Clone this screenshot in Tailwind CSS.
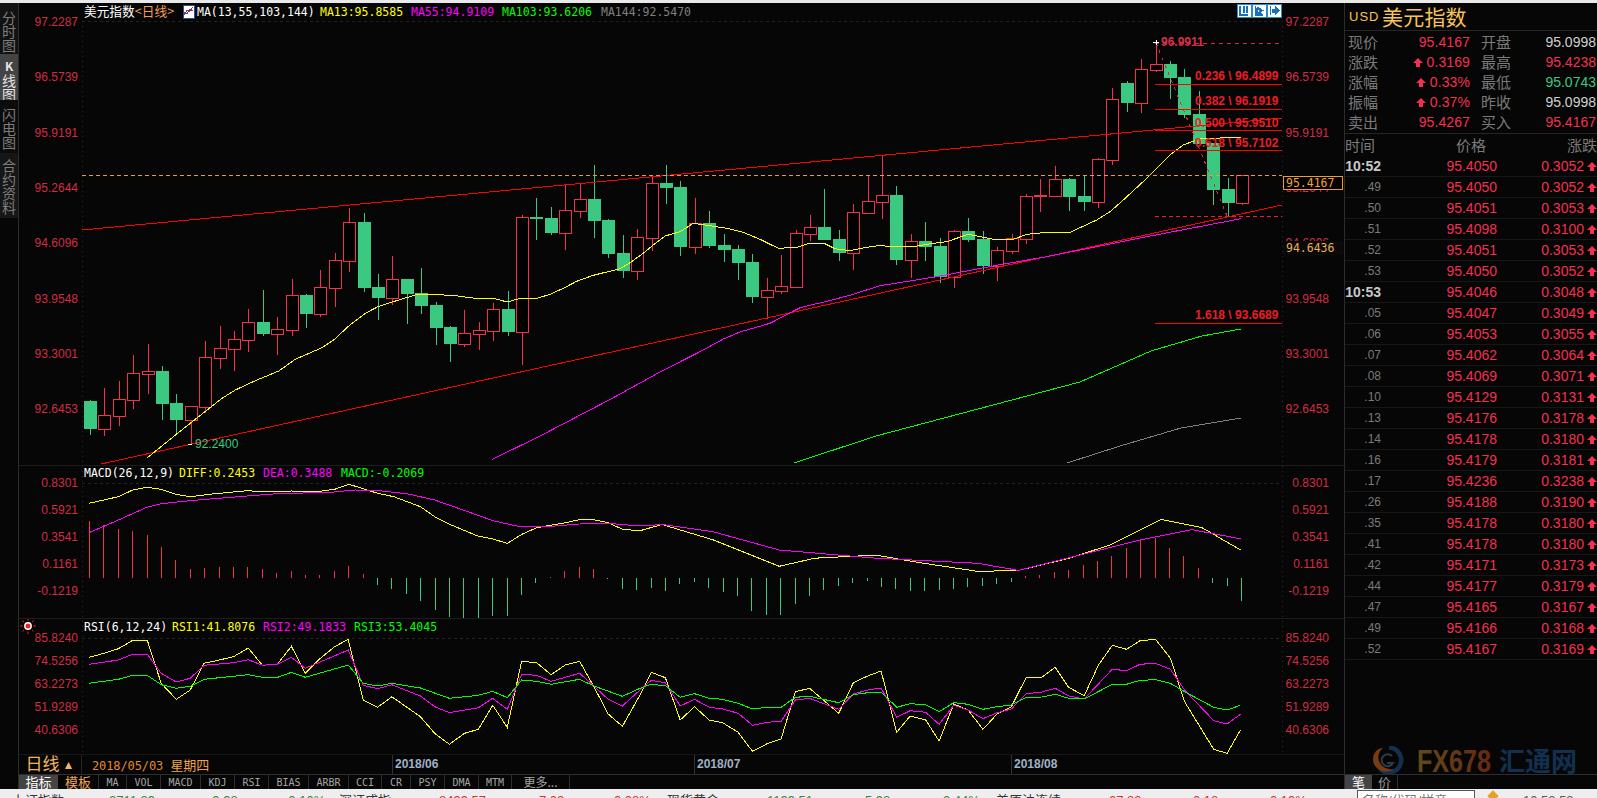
<!DOCTYPE html>
<html lang="zh-CN">
<head>
  <meta charset="UTF-8" />
  <title>美元指数 日线</title>
  <script src="https://cdn.jsdelivr.net/npm/@tailwindcss/browser@4"></script>
</head>
<body class="bg-[#060606] font-['Liberation_Sans','Noto_Sans_CJK_SC',sans-serif]">
<div class="w-[1597px] h-[798px] overflow-hidden flex flex-col">
  <!-- window strip -->
  <div class="h-[3px] bg-[#e9e9eb]"></div>

  <div class="flex h-[786px]">
    <!-- side tabs -->
    <div class="w-[19px] shrink-0 border-r border-[#2c2c2c] flex flex-col items-center text-[14px] leading-[14px] text-[#7d7d7d] font-['Noto_Sans_CJK_SC',sans-serif]">
      <div class="w-full h-[51px] pt-[7px] bg-[#121212] text-center">分<br>时<br>图</div>
      <div class="w-full h-[46px] pt-[4px] bg-[#444444] text-center text-[#e4e4e4]"><b class="text-[12px]">K</b><br>线<br>图</div>
      <div class="w-full h-[53px] pt-[7px] bg-[#0c0c0c] text-center">闪<br>电<br>图</div>
      <div class="w-full h-[65px] pt-[5px] bg-[#161616] text-center">合<br>约<br>资<br>料</div>
    </div>

    <!-- chart column -->
    <div class="w-[1325px] shrink-0 flex flex-col">
      <svg id="chart" width="1325" height="751" viewBox="19 3 1325 751" shape-rendering="crispEdges" class="block">
        <!-- title rows -->
        <g font-size="11.5" font-family="DejaVu Sans Mono" shape-rendering="auto">
          <text x="84" y="16" fill="#ffffff" font-size="12.7" font-family="Noto Sans CJK SC">美元指数<tspan fill="#f0a050">&lt;日线&gt;</tspan></text>
          <text x="197" y="16" fill="#ffffff">MA(13,55,103,144)</text>
          <text x="320" y="16" fill="#ffff00">MA13:95.8585</text>
          <text x="411" y="16" fill="#ff00ff">MA55:94.9109</text>
          <text x="502" y="16" fill="#00ff00">MA103:93.6206</text>
          <text x="601" y="16" fill="#808080">MA144:92.5470</text>
          <text x="84" y="477" fill="#ffffff">MACD(26,12,9)</text>
          <text x="179" y="477" fill="#ffff00">DIFF:0.2453</text>
          <text x="263" y="477" fill="#ff00ff">DEA:0.3488</text>
          <text x="341" y="477" fill="#00ff00">MACD:-0.2069</text>
          <text x="84" y="631" fill="#ffffff">RSI(6,12,24)</text>
          <text x="172" y="631" fill="#ffff00">RSI1:41.8076</text>
          <text x="263" y="631" fill="#ff00ff">RSI2:49.1833</text>
          <text x="354" y="631" fill="#00ff00">RSI3:53.4045</text>
        </g>
        <!-- ma icon -->
        <rect x="183" y="5" width="11" height="13" fill="#ffffff" stroke="#2a4aa0" />
        <path d="M184 15 187 10 189 12 193 7" fill="none" stroke="#e02020" />
        <path d="M184 12 187 14 190 9 193 11" fill="none" stroke="#2050d0" />
        <!-- top right view buttons -->
        <g>
          <rect x="1237" y="4" width="14" height="13" fill="#ffffff" stroke="#2a88d8" />
          <path d="M1240 6V15H1248M1244 6V13M1247 6V13" fill="none" stroke="#1a70c0" stroke-width="1.4" />
          <rect x="1252" y="4" width="14" height="13" fill="#ffffff" stroke="#2a88d8" />
          <path d="M1255 6V15H1263M1257 7 1263 10.5 1257 13Z" fill="#1a70c0" stroke="#1a70c0" />
          <rect x="1267" y="4" width="14" height="13" fill="#ffffff" stroke="#2a88d8" />
          <path d="M1270 6V15M1272 9H1275V6L1279 10.5 1275 15V12H1272Z" fill="#1a70c0" stroke="#1a70c0" />
        </g>
        <!-- alert sun -->
        <g stroke="#ee2222" shape-rendering="auto">
          <path d="M28 618V620.5M28 631.5V634M20 626H22.5M33.5 626H36M22.5 620.5 24 622M32 630 33.5 631.5M22.5 631.5 24 630M32 622 33.5 620.5" />
          <circle cx="28" cy="626" r="3.2" fill="#ee2222" stroke="#ffffff" stroke-width="1.4" />
        </g>
      </svg>

      <!-- date row -->
      <div class="relative h-[20px] border-t border-[#171717] flex items-center">
        <div class="w-[63px] h-full border-r border-[#242424] flex items-center justify-center gap-[3px] text-[17px] text-[#f2b460]">日线<span class="text-[12px] text-[#f2b460]">▲</span></div>
        <div class="ml-[10px] text-[12px] text-[#e08a2c] font-['DejaVu_Sans_Mono',monospace] tracking-[-0.1px]">2018/05/03 <span class="text-[13px] text-[#f0a24a] font-['Noto_Sans_CJK_SC',sans-serif]">星期四</span></div>
        <span class="absolute left-[373px] top-0 h-full border-l border-[#333333] pl-[2px] text-[12px] font-bold leading-[19px] text-[#9fb2c6]">2018/06</span>
        <span class="absolute left-[675px] top-0 h-full border-l border-[#333333] pl-[2px] text-[12px] font-bold leading-[19px] text-[#9fb2c6]">2018/07</span>
        <span class="absolute left-[992px] top-0 h-full border-l border-[#333333] pl-[2px] text-[12px] font-bold leading-[19px] text-[#9fb2c6]">2018/08</span>
      </div>

      <!-- indicator tabs -->
      <div class="h-[15px] border-t border-[#2e2e2e] flex items-center text-[10px] text-[#a4a4a4] font-['DejaVu_Sans_Mono',monospace]">
        <div class="w-[39px] h-full bg-[#444444] flex items-center justify-center text-[13px] text-white font-['Noto_Sans_CJK_SC',sans-serif]">指标</div>
        <div class="w-[41px] h-full border-r border-[#2e2e2e] flex items-center justify-center text-[13px] text-[#f2a64a] font-['Noto_Sans_CJK_SC',sans-serif]">模板</div>
        <div class="w-[28px] h-full border-r border-[#2e2e2e] flex items-center justify-center">MA</div>
        <div class="w-[34px] h-full border-r border-[#2e2e2e] flex items-center justify-center">VOL</div>
        <div class="w-[40px] h-full border-r border-[#2e2e2e] flex items-center justify-center">MACD</div>
        <div class="w-[34px] h-full border-r border-[#2e2e2e] flex items-center justify-center">KDJ</div>
        <div class="w-[34px] h-full border-r border-[#2e2e2e] flex items-center justify-center">RSI</div>
        <div class="w-[40px] h-full border-r border-[#2e2e2e] flex items-center justify-center">BIAS</div>
        <div class="w-[40px] h-full border-r border-[#2e2e2e] flex items-center justify-center">ARBR</div>
        <div class="w-[33px] h-full border-r border-[#2e2e2e] flex items-center justify-center">CCI</div>
        <div class="w-[29px] h-full border-r border-[#2e2e2e] flex items-center justify-center">CR</div>
        <div class="w-[34px] h-full border-r border-[#2e2e2e] flex items-center justify-center">PSY</div>
        <div class="w-[34px] h-full border-r border-[#2e2e2e] flex items-center justify-center">DMA</div>
        <div class="w-[33px] h-full border-r border-[#2e2e2e] flex items-center justify-center">MTM</div>
        <div class="w-[58px] h-full border-r border-[#2e2e2e] flex items-center justify-center text-[12px] font-['Noto_Sans_CJK_SC',sans-serif]">更多...</div>
      </div>
    </div>

    <!-- quote panel -->
    <div class="w-[253px] shrink-0 border-l border-[#2c2c2c] flex flex-col">
      <div class="h-[28px] border-b border-[#262626] flex items-center pl-[4px] text-[#f6c35c]">
        <span class="text-[13px] tracking-[1px] w-[33px]">USD</span>
        <span class="text-[21px] tracking-[0.2px] font-['Noto_Sans_CJK_SC',sans-serif] leading-none">美元指数</span>
      </div>

      <div class="h-[103px] pt-px border-b border-[#262626]" id="stats"></div>

      <div class="h-[22px] flex items-center text-[15px] text-[#7a7a7a] font-['Noto_Sans_CJK_SC',sans-serif] whitespace-nowrap">
        <span class="w-[112px]">时间</span><span class="w-[112px]">价格</span><span>涨跌</span>
      </div>
      <div id="trades"></div>

      <!-- watermark -->
      <svg class="mt-auto ml-[27px] block" width="225" height="28" viewBox="0 0 225 28">
        <defs>
          <linearGradient id="fxFill" x1="0" x2="1" y1="0" y2="0">
            <stop offset="0" stop-color="#5e4a1c" />
            <stop offset="1" stop-color="#682810" />
          </linearGradient>
        </defs>
        <path d="M17 1.5A12.500 12.500 0 1 1 8 23" fill="none" stroke="#14304e" stroke-width="4.500" />
        <path d="M1 14C1 6 6 2 11 2 6 6 5 12 8 17 11 22 17 24 22 23 17 27 10 26 6 23 2.500 20 1 17 1 14Z" fill="#7a3a12" />
        <path d="M20 10A6 6 0 1 0 21 17H15" fill="none" stroke="#2a3c4c" stroke-width="2" />
        <text x="45" y="26" font-family="Liberation Sans" font-weight="700" font-size="31" textLength="74" lengthAdjust="spacingAndGlyphs" fill="url(#fxFill)">FX678</text>
        <text x="127" y="25" font-family="Noto Sans CJK SC" font-weight="700" font-size="26" fill="#12304f">汇通网</text>
      </svg>

      <div class="h-[15px] border-t border-[#2e2e2e] flex items-center text-[13px] font-['Noto_Sans_CJK_SC',sans-serif]">
        <div class="w-[27px] h-full bg-[#444444] flex items-center justify-center text-white">笔</div>
        <div class="w-[26px] h-full border-r border-[#2e2e2e] flex items-center justify-center text-[#9a9a9a]">价</div>
      </div>
    </div>
  </div>

  <!-- index ticker, cut off by the window edge -->
  <div class="h-[9px] bg-[#eeeef0] flex overflow-hidden text-[13px] leading-[13px] whitespace-nowrap">
    <div class="w-[109px] pl-[12px] pt-[5px] text-[#333333]">上证指数</div>
    <div class="w-[99px] pt-[5px] text-[#1f8f3a]">2711.39</div>
    <div class="w-[76px] pt-[5px] text-[#1f8f3a]">-9.98 ↓</div>
    <div class="w-[55px] pt-[5px] text-[#1f8f3a]">-0.10%</div>
    <div class="w-[100px] pt-[5px] text-[#333333]">深证成指</div>
    <div class="w-[100px] pt-[5px] text-[#d8322c]">8499.57</div>
    <div class="w-[75px] pt-[5px] text-[#d8322c]">7.02 ↑</div>
    <div class="w-[53px] pt-[5px] text-[#d8322c]">0.08%</div>
    <div class="w-[100px] pt-[5px] text-[#333333]">现货黄金</div>
    <div class="w-[98px] pt-[5px] text-[#1f8f3a]">1199.51</div>
    <div class="w-[78px] pt-[5px] text-[#1f8f3a]">5.98 ↓</div>
    <div class="w-[53px] pt-[5px] text-[#1f8f3a]">0.44%</div>
    <div class="w-[113px] pt-[5px] text-[#333333]">美原油连续</div>
    <div class="w-[84px] pt-[5px] text-[#d8322c]">67.83</div>
    <div class="w-[77px] pt-[5px] text-[#d8322c]">0.18 ↑</div>
    <div class="w-[87px] pt-[5px] text-[#d8322c]">0.19%</div>
    <div class="w-[118px] h-full mt-px border border-[#555555] bg-white pl-[4px] pt-[3px] text-[#777777]">名称/代码/拼音</div>
    <div class="w-[48px] pl-[14px] pt-[3px]"><span class="block w-[8px] h-[8px] rotate-45 bg-[#e8a020]"></span></div>
    <div class="pt-[5px] text-[#555555]">10:52:58</div>
  </div>
</div>

<script>
  const svg = document.getElementById('chart');
  const NS = 'http://www.w3.org/2000/svg';
  const RED = '#f5304f', GREEN = '#3bc880', BG = '#060606';

  function el(tag, attrs, text) {
    const n = document.createElementNS(NS, tag);
    for (const k in attrs) n.setAttribute(k, attrs[k]);
    if (text) n.textContent = text;
    svg.appendChild(n);
    return n;
  }

  // crop coordinates -> page coordinates
  const conv = (pts, x0, sx, y0, sy) => pts.map(p => [x0 + p[0] / sx, y0 + p[1] / sy]);
  const poly = (pts, color, dash) => el('polyline', {
    points: pts.map(p => p[0].toFixed(1) + ',' + p[1].toFixed(1)).join(' '),
    fill: 'none', stroke: color, 'stroke-dasharray': dash || 'none'
  });
  const hline = (x1, x2, y, color, dash) => el('line', { x1, x2, y1: y, y2: y, stroke: color, 'stroke-dasharray': dash || 'none' });

  // panel frames
  hline(19, 1344, 465.5, '#1c1c1c');
  hline(19, 1344, 618.5, '#1c1c1c');
  [21.5, 483.5, 638.5].forEach(y => hline(82, 1282, y, '#222222', '3 3'));
  [82.5, 1282.5].forEach(x => el('line', { x1: x, x2: x, y1: 21, y2: 753, stroke: '#2a2a2a', 'stroke-dasharray': '1 4' }));

  // axes
  const axes = [
    [['97.2287', '96.5739', '95.9191', '95.2644', '94.6096', '93.9548', '93.3001', '92.6453'], 21.5, 55.3],
    [['0.8301', '0.5921', '0.3541', '0.1161', '-0.1219'], 482.7, 27],
    [['85.8240', '74.5256', '63.2273', '51.9289', '40.6306'], 637.7, 23]
  ];
  axes.forEach(([labels, top, step]) => labels.forEach((t, i) => {
    const y = top + i * step + 4.5;
    el('text', { x: 78, y, fill: '#d22c44', 'font-size': 12, 'text-anchor': 'end', 'shape-rendering': 'auto' }, t);
    el('text', { x: 1329, y, fill: '#d22c44', 'font-size': 12, 'text-anchor': 'end', 'shape-rendering': 'auto' }, t);
  }));

  // candles: high, body top, body bottom, low, u = up / d = down (crop y values)
  const c1 = [[630,633,717,735,'d'],[595,676,716,738,'u'],[573,628,677,708,'u'],[495,550,629,657,'u'],[462,544,551,612,'u'],[528,543,642,690,'d'],[612,639,690,735,'d'],[649,649,689,762,'u'],[453,502,650,668,'u'],[408,475,503,537,'u'],[423,448,476,543,'u'],[357,397,449,486,'u'],[300,396,432,438,'d'],[381,418,431,495,'u'],[267,316,419,438,'u'],[312,315,372,414,'d'],[240,292,371,381,'u'],[189,211,293,351,'u'],[54,97,212,246,'u'],[69,96,294,306,'d'],[252,291,324,390,'d'],[198,268,323,345,'u'],[267,267,312,402,'d'],[234,309,348,372,'d'],[336,345,414,465,'d'],[408,411,462,516,'d'],[360,430,461,471,'u'],[396,420,431,480,'u'],[339,358,422,453,'u']];
  const c2 = [[423,477,546,558,'d'],[195,202,545,645,'u'],[144,201,207,270,'d'],[171,204,249,255,'d'],[105,181,248,300,'u'],[100,148,182,204,'u'],[45,147,213,264,'d'],[207,210,312,324,'d'],[255,309,363,384,'d'],[237,262,362,390,'u'],[75,99,263,303,'u'],[45,99,114,162,'d'],[93,111,291,318,'d'],[144,220,290,312,'u'],[183,219,288,294,'d'],[252,285,300,336,'d'],[285,297,339,390,'d'],[312,336,441,459,'d'],[384,421,440,507,'u'],[315,409,422,432,'u'],[240,250,410,414,'u'],[195,232,251,273,'u'],[117,231,270,270,'d'],[240,267,309,333,'d'],[162,187,308,360,'u'],[78,154,188,191,'u'],[15,136,155,207,'u']];
  const c3 = [[468,495,690,705,'d'],[612,634,689,744,'u'],[576,633,651,693,'d'],[625,648,741,759,'d'],[600,604,741,774,'u'],[564,603,630,636,'d'],[603,627,708,732,'d'],[651,660,708,753,'u'],[612,625,662,672,'u'],[492,499,626,642,'u'],[447,495,499,546,'u'],[408,448,497,497,'u'],[444,447,501,543,'d'],[435,498,516,543,'d'],[384,388,516,534,'u'],[174,208,389,405,'u'],[153,159,219,246,'d'],[87,118,218,249,'u'],[33,103,120,126,'u'],[93,102,144,207,'d'],[117,141,255,264,'d'],[183,252,342,342,'d'],[339,339,480,525,'d'],[444,477,519,558,'d'],[435,436,519,525,'u']];
  const candles = [[c1, 190], [c2, 150], [c3, 30]].flatMap(([set, y0]) => set.map(c => [y0 + c[0] / 3, y0 + c[1] / 3, y0 + c[2] / 3, y0 + c[3] / 3, c[4]].map(v => typeof v === 'number' ? Math.round(v) : v)));
  const barX = i => Math.round(90 + 14.4 * i);

  candles.forEach(([hi, top, bot, lo, dir], i) => {
    const x = barX(i), color = dir === 'u' ? RED : GREEN;
    el('rect', { x, y: hi, width: 1, height: lo - hi, fill: color });
    if (dir === 'u') el('rect', { x: x - 5.5, y: top + 0.5, width: 12, height: Math.max(bot - top, 1), fill: '#000000', stroke: color });
    else el('rect', { x: x - 6, y: top, width: 13, height: bot - top, fill: color });
  });

  // moving averages
  const ma13 = [
    ...conv([[195,804],[283,733],[360,672],[420,625],[460,600],[520,572],[590,543],[640,508],[720,473],[755,450],[800,408],[850,370],[890,349],[950,330],[1000,315],[1050,313],[1120,317],[1180,325]], 82, 3, 190, 3),
    ...conv([[40,445],[82,456],[120,445],[172,445],[210,433],[250,415],[290,394],[340,376],[420,356],[450,338],[490,310],[520,285],[555,258],[600,245],[640,220],[690,227],[740,235],[790,247],[840,268],[895,295],[950,292],[985,281],[1035,281],[1065,296],[1110,302],[1150,294],[1200,286]], 480, 3, 150, 3),
    ...conv([[30,650],[100,650],[160,640],[200,635],[265,613],[340,628],[400,628],[440,613],[500,607],[570,607],[650,570],[690,545],[730,510],[810,436],[870,375],[910,345],[960,326],[1083,322]], 880, 3, 30, 3)
  ];
  const ma55 = [
    [492,459.5],[540,436],[611,399],[660,372],
    ...conv([[670,600],[730,567],[780,546],[870,520],[960,473],[1040,454],[1110,436]], 480, 3, 150, 3),
    ...conv([[0,767],[170,740],[350,706],[500,680],[800,620],[1083,566]], 880, 3, 30, 3)
  ];
  poly([[82,230],[1282,118]], '#ff0000');
  poly([[101,464],[1282,205]], '#ff0000');
  poly(ma13, '#ffff00');
  poly(ma55, '#ff00ff');
  poly([[794,463],[876,436],[978,409],[1080,382],[1151,351],[1202,336],[1241,329]], '#00ff00');
  poly([[1067,463],[1120,446],[1181,428],[1241,418]], '#808080');

  // current price and fibonacci levels
  hline(82, 1282, 175.5, '#e89a3c', '4 3');
  poly([[1156,43],[1227,216]], '#e8252d', '3 5');
  hline(1155, 1282, 43.5, '#d6283c', '4 4');
  hline(1155, 1282, 216.5, '#ff1a1a', '4 3');
  [84.5, 109.5, 130.5, 150.5, 323.5].forEach(y => hline(1155, 1282, y, '#ff0000'));
  [['0.236 \\ 96.4899', 80], ['0.382 \\ 96.1919', 105], ['0.500 \\ 95.9510', 127], ['0.618 \\ 95.7102', 147], ['1.618 \\ 93.6689', 319]].forEach(([t, y]) => {
    el('text', { x: 1195, y, fill: '#ee1c25', 'font-size': 12, 'font-weight': 700, 'shape-rendering': 'auto' }, t);
  });
  el('text', { x: 1161, y: 46, fill: '#d6304a', 'font-size': 12, 'font-weight': 700, 'shape-rendering': 'auto' }, '96.9911');
  el('text', { x: 195, y: 448, fill: GREEN, 'font-size': 12, 'shape-rendering': 'auto' }, '92.2400');
  hline(188, 192, 444.5, '#ffffff');
  hline(1153, 1159, 42.5, '#ffffff');
  el('line', { x1: 1156, x2: 1156, y1: 40, y2: 45, stroke: '#ffffff' });

  // price tags on the right axis
  el('rect', { x: 1283.5, y: 176.5, width: 59, height: 13, fill: '#000000', stroke: '#f09a30' });
  el('text', { x: 1286, y: 187, fill: '#f0a040', 'font-size': 11.5, 'font-family': 'DejaVu Sans Mono', 'shape-rendering': 'auto' }, '95.4167');
  el('rect', { x: 1283, y: 241, width: 60, height: 14, fill: '#0a0a0a' });
  el('text', { x: 1286, y: 252, fill: '#e8b060', 'font-size': 11.5, 'font-family': 'DejaVu Sans Mono', 'shape-rendering': 'auto' }, '94.6436');

  // macd histogram, pixels above / below the zero line
  const macd = [57,53,49,47,43,31,18,9,10,11,11,11,9,5,7,3,3,7,12,4,-7,-11,-16,-23,-32,-39,-40,-40,-38,-38,-17,-5,1,7,11,9,-1,-11,-12,-10,-13,-6,-4,-10,-14,-18,-33,-37,-37,-26,-18,-12,-8,-5,-3,-9,-11,-13,-13,-12,-11,-9,-8,-6,-4,2,3,6,8,13,17,22,30,38,40,30,22,10,-5,-8,-23];
  macd.forEach((v, i) => {
    el('rect', { x: barX(i) - 1, y: v > 0 ? 578 - v : 578, width: 1, height: Math.abs(v), fill: v > 0 ? RED : GREEN });
  });
  poly([
    ...conv([[218,190],[290,170],[325,150],[360,142],[395,148],[430,163],[465,170],[520,162],[605,152],[660,156],[715,153],[770,156],[820,148],[855,133],[890,146],[925,160],[965,170],[1030,200],[1065,230],[1100,252],[1170,288],[1205,296],[1243,310],[1280,282],[1315,263],[1385,248],[1420,239],[1455,239],[1490,248],[1525,268],[1568,272]], 0, 2.45, 440, 3),
    ...conv([[650,515],[700,530],[765,556],[800,548],[860,545],[900,552],[960,561],[1000,560],[1050,548],[1090,535],[1140,510],[1180,518],[1218,540]], 0, 0.9818, 0, 0.9818)
  ], '#ffff00');
  poly([
    ...conv([[218,278],[290,240],[360,202],[395,191],[465,182],[605,168],[690,160],[800,158],[870,150],[930,152],[1000,162],[1065,180],[1130,208],[1210,243],[1270,259],[1350,259],[1420,252],[1480,249],[1568,258]], 0, 2.45, 440, 3),
    ...conv([[650,515],[700,522],[765,540],[860,548],[960,553],[1000,560],[1060,545],[1120,530],[1170,520],[1218,529]], 0, 0.9818, 0, 0.9818)
  ], '#ff00ff');

  // rsi
  poly([
    ...conv([[218,172],[255,160],[290,146],[325,121],[361,121],[395,250],[432,298],[466,270],[500,190],[537,180],[572,170],[608,144],[643,196],[680,192],[714,139],[748,220],[785,175],[820,140],[853,118],[890,300],[925,322],[960,290],[1030,350],[1065,400],[1101,433],[1138,400],[1172,388],[1207,316],[1243,382],[1278,184],[1315,188],[1350,224],[1385,195],[1420,184],[1455,260],[1490,342],[1525,379]], 0, 2.45, 600, 3),
    ...conv([[0,285],[25,217],[57,233],[90,360],[122,320],[155,360],[185,368],[220,397],[252,454],[285,431],[316,417],[348,275],[380,265],[445,340],[478,248],[510,228],[540,213],[575,397],[605,348],[640,360],[670,423],[703,312],[735,330],[768,388],[800,342],[832,320],[865,232],[900,232],[930,202],[960,262],[995,287],[1027,195],[1058,136],[1090,148],[1120,122],[1155,118],[1188,175],[1220,305],[1285,448],[1315,460],[1345,390]], 640, 2.24, 600, 3)
  ], '#ffff00');
  poly([
    ...conv([[218,193],[290,180],[325,163],[361,163],[395,220],[432,246],[466,235],[500,196],[572,188],[608,179],[643,196],[680,192],[714,172],[748,205],[853,150],[890,256],[925,266],[960,254],[1030,288],[1065,320],[1101,338],[1172,323],[1207,295],[1243,328],[1278,223],[1315,226],[1350,244],[1420,220],[1455,258],[1490,298],[1525,318]], 0, 2.45, 600, 3),
    ...conv([[0,270],[25,241],[57,248],[90,318],[122,298],[155,322],[185,327],[220,340],[252,376],[285,367],[316,364],[348,300],[380,295],[445,328],[478,282],[510,270],[540,264],[575,352],[605,332],[640,337],[670,373],[703,316],[735,330],[768,356],[800,338],[832,327],[865,281],[900,276],[930,265],[960,288],[995,297],[1058,208],[1090,212],[1120,193],[1155,190],[1188,208],[1220,270],[1285,362],[1315,372],[1345,343]], 640, 2.24, 600, 3)
  ], '#ff00ff');
  poly([
    ...conv([[218,250],[290,238],[325,226],[361,226],[395,254],[432,265],[466,259],[500,238],[608,224],[643,232],[680,232],[714,217],[748,232],[853,195],[890,250],[925,258],[960,250],[1030,264],[1101,295],[1172,286],[1207,274],[1243,293],[1278,240],[1315,244],[1350,253],[1420,238],[1455,258],[1525,289]], 0, 2.45, 600, 3),
    ...conv([[0,265],[25,253],[57,257],[90,292],[122,281],[155,295],[185,298],[220,310],[252,327],[285,322],[316,322],[348,292],[380,289],[445,308],[478,284],[510,278],[540,276],[575,322],[605,311],[640,314],[670,335],[703,308],[735,313],[768,328],[800,320],[832,315],[865,292],[900,291],[930,283],[960,295],[995,297],[1058,253],[1090,253],[1120,241],[1155,239],[1188,250],[1220,275],[1285,322],[1315,330],[1345,316]], 640, 2.24, 600, 3)
  ], '#00ff00');

  // quote panel
  const arrow = '<svg class="inline-block" width="10" height="9" viewBox="0 0 10 9"><path d="M5 0 10 5H7V9H3V5H0Z" fill="#f5304f"/></svg>';
  const stats = [
    ['现价', '95.4167', '开盘', '95.0998', 'text-[#d0d0d0]'],
    ['涨跌', arrow + ' 0.3169', '最高', '95.4238', 'text-[#f5304f]'],
    ['涨幅', arrow + ' 0.33%', '最低', '95.0743', 'text-[#3bc880]'],
    ['振幅', arrow + ' 0.37%', '昨收', '95.0998', 'text-[#d0d0d0]'],
    ['卖出', '95.4267', '买入', '95.4167', 'text-[#f5304f]']
  ];
  document.getElementById('stats').innerHTML = stats.map(s => `
    <div class="flex items-center h-[20px] text-[14px]">
      <span class="w-[33px] pl-[3px] text-[15px] text-[#7a7a7a] font-['Noto_Sans_CJK_SC',sans-serif]">${s[0]}</span>
      <span class="w-[92px] text-right text-[#f5304f] tracking-[0.1px]">${s[1]}</span>
      <span class="ml-[11px] w-[30px] text-[15px] text-[#7a7a7a] font-['Noto_Sans_CJK_SC',sans-serif]">${s[2]}</span>
      <span class="w-[85px] text-right ${s[4]}">${s[3]}</span>
    </div>`).join('');

  const trades = ['10:52 95.4050 0.3052', '.49 95.4050 0.3052', '.50 95.4051 0.3053', '.51 95.4098 0.3100', '.52 95.4051 0.3053', '.53 95.4050 0.3052', '10:53 95.4046 0.3048', '.05 95.4047 0.3049', '.06 95.4053 0.3055', '.07 95.4062 0.3064', '.08 95.4069 0.3071', '.10 95.4129 0.3131', '.13 95.4176 0.3178', '.14 95.4178 0.3180', '.16 95.4179 0.3181', '.17 95.4236 0.3238', '.26 95.4188 0.3190', '.35 95.4178 0.3180', '.41 95.4178 0.3180', '.42 95.4171 0.3173', '.44 95.4177 0.3179', '.47 95.4165 0.3167', '.49 95.4166 0.3168', '.52 95.4167 0.3169'];
  document.getElementById('trades').innerHTML = trades.map(r => {
    const [t, price, chg] = r.split(' ');
    const time = t[0] === '.'
      ? `<span class="w-[36px] text-right text-[12px] text-[#7a7a7a]">${t}</span>`
      : `<span class="w-[36px] text-right text-[14px] font-bold text-[#c8c8c8]">${t}</span>`;
    return `<div class="flex items-center h-[21px] border-b border-[#171717] text-[14px] text-[#f5304f]">${time}<span class="w-[116px] text-right">${price}</span><span class="w-[87px] text-right">${chg}</span><span class="ml-[3px]">${arrow}</span></div>`;
  }).join('');
</script>
</body>
</html>
